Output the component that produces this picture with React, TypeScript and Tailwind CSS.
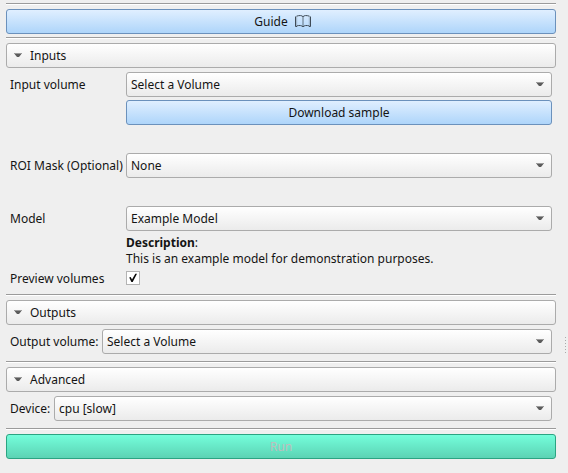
import type { ReactNode } from "react";

function Separator({ className = "" }: { className?: string }) {
  return <div className={`h-[2px] shrink-0 border-t border-[#9b9b9b] bg-white ${className}`} />;
}

function Arrow() {
  return (
    <svg width="8" height="5" viewBox="0 0 8 5" className="shrink-0">
      <path d="M0 0H8L7 1.5L5 4H3L1 1.5Z" fill="#5c5c5c" />
      <path d="M0 0H8V1H0Z" fill="#9c9c9c" />
    </svg>
  );
}

function SectionHeader({ title, className = "" }: { title: string; className?: string }) {
  return (
    <button className={`flex h-[25px] w-full shrink-0 items-center gap-2 rounded-[3px] border border-[#ababab] bg-linear-to-b from-white to-[#ebebeb] pl-[7px] text-left ${className}`}>
      <Arrow />
      <span>{title}</span>
    </button>
  );
}

function Combo({ value }: { value: string }) {
  return (
    <button className="flex h-[25px] min-w-0 flex-1 items-center justify-between rounded-[3px] border border-[#ababab] bg-linear-to-b from-white to-[#ebebeb] pr-[7px] pl-1 text-left">
      <span>{value}</span>
      <Arrow />
    </button>
  );
}

function Row({ label, labelClass = "w-[116px]", className = "", children }: { label: string; labelClass?: string; className?: string; children: ReactNode }) {
  return (
    <div className={`flex h-[25px] shrink-0 items-center pr-1 pl-1 ${className}`}>
      <span className={`shrink-0 ${labelClass}`}>{label}</span>
      {children}
    </div>
  );
}

const blue = "flex h-[25px] items-center justify-center rounded-[3px] border border-[#6b91bc] bg-linear-to-b from-[#e0efff] to-[#aed5fa]";

export default function App() {
  return (
    <div className="flex h-[473px] w-[568px] overflow-hidden bg-[#efefef] font-['Noto_Sans',sans-serif] text-[12px] leading-4 whitespace-nowrap text-[#141414]">
      <main className="ml-1.5 flex w-[550px] flex-col">
        <Separator className="mt-[3px]" />
        <button className={`${blue} mt-1 shrink-0 gap-[7px] pl-[3px]`}>
          <span>Guide</span>
          <svg width="16" height="13" viewBox="0 0 16 13" fill="none" stroke="#3f4b56" strokeWidth="1">
            <path d="M.5 1.5V11.5H2M15.5 1.5V11.5H14" />
            <path d="M1.5 1.2C4.5.2 6.8.3 8 1.7C9.2.3 11.5.2 14.5 1.2" />
            <path d="M1.5 11C4.5 10 6.8 10.5 8 11.8C9.2 10.5 11.5 10 14.5 11" />
            <path d="M8 1.7V11.5" strokeOpacity=".75" />
            <path d="M1.7 1.5V10.5M14.3 1.5V10.5" strokeWidth=".7" strokeOpacity=".45" />
          </svg>
        </button>
        <Separator className="mt-[3px]" />
        <SectionHeader title="Inputs" className="mt-1" />
        <Row label="Input volume" className="mt-1"><Combo value="Select a Volume" /></Row>
        <button className={`${blue} mt-[3px] mr-1 ml-[120px] shrink-0`}>Download sample</button>
        <Row label="ROI Mask (Optional)" className="mt-7"><Combo value="None" /></Row>
        <Row label="Model" className="mt-7"><Combo value="Example Model" /></Row>
        <div className="mt-1 ml-[120px] h-8 shrink-0">
          <p><b>Description</b>:</p>
          <p>This is an example model for demonstration purposes.</p>
        </div>
        <div className="mt-1 flex h-[14px] shrink-0 items-center pl-1">
          <span className="w-[116px] pt-0.5">Preview volumes</span>
          <span className="flex size-[14px] items-center justify-center border border-[#b4b4b4] bg-white">
            <svg width="10" height="10" viewBox="0 0 10 10">
              <path d="M1.2 4.5L2.7 4L4 6.4L7.3.8H9L4.7 9H3.4Z" fill="#080808" />
            </svg>
          </span>
        </div>
        <Separator className="mt-[9px]" />
        <SectionHeader title="Outputs" className="mt-1" />
        <Row label="Output volume:" labelClass="w-[92px]" className="mt-1"><Combo value="Select a Volume" /></Row>
        <Separator className="mt-[7px]" />
        <SectionHeader title="Advanced" className="mt-1" />
        <Row label="Device:" labelClass="w-11" className="mt-1"><Combo value="cpu [slow]" /></Row>
        <Separator className="mt-[7px]" />
        <button disabled className="mt-1 flex h-[25px] shrink-0 items-center justify-center rounded-[3px] border border-[#2ba482] bg-linear-to-b from-[#74fedb] to-[#5cd3b4] text-[#bebebe]">Run</button>
      </main>
      <div className="mt-[337px] ml-[9px] flex flex-col gap-0.5">
        {[0, 1, 2, 3, 4, 5].map((i) => <i key={i} className="size-px bg-[#aaa]" />)}
      </div>
    </div>
  );
}
